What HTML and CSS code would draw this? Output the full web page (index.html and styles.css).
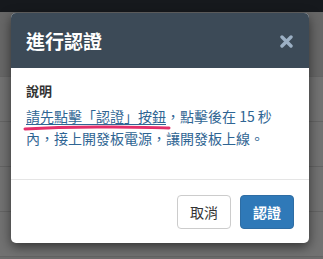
FILE: index.html
```html
<!DOCTYPE html>
<html lang="zh-Hant">

<head>
    <meta charset="UTF-8">
    <meta name="viewport" content="width=device-width, initial-scale=1.0">
    <title>進行認證</title>

    <link rel="stylesheet" href="styles.css">
</head>

<body>
    <div class="topbar"></div>

    <!-- page behind the dialog, dimmed -->
    <div class="page">
        <div class="row row-head"></div>
        <div class="row"></div>
        <div class="row"></div>
        <div class="row"></div>
        <div class="row"></div>
    </div>

    <div class="modal">
        <div class="modalHeader">
            <h4>進行認證</h4>
            <span class="close">
                <svg width="13" height="13" viewBox="0 0 13 13">
                    <path d="M2 2 L11 11 M11 2 L2 11" stroke="#9cb0c4" stroke-width="3.4" stroke-linecap="round" />
                </svg>
            </span>
        </div>

        <div class="modalBody">
            <div class="label">說明</div>
            <p class="desc">
                <a href="#" class="mark">請先點擊「認證」按鈕<svg class="scribble" width="148" height="7" viewBox="0 0 148 7">
                        <path d="M2 5 Q40 2.5 90 3 T146 4" stroke="#e3306b" stroke-width="3" fill="none" stroke-linecap="round" />
                    </svg></a>，點擊後在 15 秒內，接上開發板電源，讓開發板上線。
            </p>
        </div>

        <div class="modalFooter">
            <button class="btn btnDefault">取消</button>
            <button class="btn btnPrimary">認證</button>
        </div>
    </div>
</body>

</html>
```

FILE: styles.css
```css
body {
    margin: 0;
    background-color: #6c6c6c;
    font-family: "Noto Sans CJK TC", "Noto Sans", sans-serif;
    overflow: hidden;
}

.topbar {
    height: 12px;
    background-color: #16191d;
}

.page .row {
    height: 44px;
    border-bottom: 1px solid #646464;
    background-color: #727272;
}

.page .row-head {
    height: 64px;
    background-color: #676767;
}

.modal {
    position: absolute;
    left: 11px;
    top: 13px;
    width: 298px;
    background-color: #fff;
    border-radius: 5px;
    box-shadow: 0 4px 12px rgba(0, 0, 0, 0.55);
    overflow: hidden;
}

.modalHeader {
    height: 55px;
    padding: 0 15px;
    background-color: #3c4a57;
    display: flex;
    align-items: center;
    justify-content: space-between;
}

.modalHeader h4 {
    margin: 0;
    color: #fff;
    font-size: 19px;
    font-weight: bold;
}

.close {
    display: flex;
    margin-right: 1px;
    margin-top: 1px;
}

.modalBody {
    padding: 14px 15px 30px;
    border-bottom: 1px solid #e5e5e5;
}

.label {
    font-size: 13px;
    font-weight: bold;
    line-height: 18px;
    color: #333;
}

.desc {
    margin: 5px 0 0;
    font-size: 14px;
    line-height: 22px;
    color: #2f6593;
}

.mark {
    position: relative;
    color: #2f6593;
    text-decoration: underline;
    text-underline-offset: 2px;
}

.scribble {
    position: absolute;
    left: -3px;
    top: 18px;
}

.modalFooter {
    padding: 15px 15px 14px;
    display: flex;
    justify-content: flex-end;
    gap: 9px;
}

.btn {
    width: 54px;
    height: 34px;
    border-radius: 4px;
    font-family: "Noto Sans CJK TC", "Noto Sans", sans-serif;
    font-size: 14px;
    padding: 0;
}

.btnDefault {
    background-color: #fff;
    border: 1px solid #ccc;
    color: #333;
}

.btnPrimary {
    background-color: #2f79b8;
    border: 1px solid #2e6da4;
    color: #fff;
    font-weight: bold;
}
```
